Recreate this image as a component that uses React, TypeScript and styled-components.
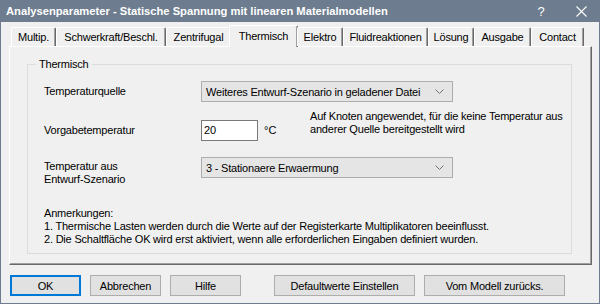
import React from "react";
import styled, { createGlobalStyle } from "styled-components";

const Global = createGlobalStyle`
  html, body { margin: 0; padding: 0; background: #f0f0f0; }
  body { font-family: "Liberation Sans", Arial, sans-serif; font-size: 11px; color: #000; }
  * { box-sizing: border-box; }
`;

const Window = styled.div`
  width: 600px;
  height: 304px;
  background: #f0f0f0;
  border: 1px solid #6d7c8e;
  border-top: none;
  display: flex;
  flex-direction: column;
  overflow: hidden;
`;

const TitleBar = styled.div`
  height: 22px;
  margin: 0 -1px;
  background: #6d7c8e;
  display: flex;
  align-items: center;
  padding-left: 6px;
  color: #fff;
  flex-shrink: 0;
`;

const Title = styled.div`
  flex: 1;
  font-weight: bold;
  font-size: 11.2px;
  white-space: nowrap;
`;

const Help = styled.div`
  width: 36px;
  text-align: center;
  font-size: 13px;
  margin-right: 4px;
`;

const Close = styled.div`
  width: 36px;
  display: flex;
  justify-content: center;
  margin-right: 1px;
`;

const Body = styled.div`
  flex: 1;
  padding: 3px 8px 0 8px;
  display: flex;
  flex-direction: column;
`;

const TabStrip = styled.div`
  height: 21px;
  display: flex;
  align-items: flex-end;
  padding-left: 2px;
  position: relative;
  z-index: 1;
`;

const Tab = styled.div<{ $w: number; $active?: boolean }>`
  width: ${(p) => p.$w}px;
  height: ${(p) => (p.$active ? 22 : 19)}px;
  margin: ${(p) => (p.$active ? "0 -1px -1px -2px" : "0")};
  background: #f0f0f0;
  border-left: 1px solid #fff;
  border-top: 1px solid #fff;
  border-right: 1px solid #696969;
  box-shadow: inset -1px 0 0 #a0a0a0;
  border-radius: 2px 2px 0 0;
  display: flex;
  align-items: center;
  justify-content: center;
  padding-bottom: ${(p) => (p.$active ? 2 : 0)}px;
  white-space: nowrap;
  letter-spacing: -0.2px;
`;

const Panel = styled.div`
  height: 219px;
  width: 583px;
  background: #f0f0f0;
  border-left: 1px solid #fff;
  border-top: 1px solid #fff;
  border-right: 1px solid #696969;
  border-bottom: 1px solid #696969;
  box-shadow: inset -1px -1px 0 #a0a0a0;
  padding: 11px 19px 0 17px;
`;

const Group = styled.fieldset`
  margin: 0;
  height: 196px;
  border: 1px solid #dcdcdc;
  padding: 0 0 0 16px;
`;

const Legend = styled.legend`
  padding: 0 3px;
  margin-left: -8px;
  line-height: 13px;
  letter-spacing: -0.2px;
`;

const Row = styled.div<{ $top: number }>`
  display: flex;
  align-items: flex-start;
  margin-top: ${(p) => p.$top}px;
`;

const Label = styled.div<{ $pt: number }>`
  width: 157px;
  flex-shrink: 0;
  padding-top: ${(p) => p.$pt}px;
  line-height: 13px;
  letter-spacing: -0.2px;
`;

const Select = styled.div`
  width: 252px;
  height: 21px;
  flex-shrink: 0;
  background: #e5e5e5;
  border: 1px solid #adadad;
  display: flex;
  align-items: center;
  padding: 0 8px 0 4px;
  letter-spacing: -0.2px;
`;

const SelectText = styled.div`
  flex: 1;
  white-space: nowrap;
`;

const Input = styled.div`
  width: 57px;
  height: 21px;
  flex-shrink: 0;
  background: #fff;
  border: 1px solid #7a7a7a;
  padding: 3px 0 0 2px;
  line-height: 13px;
`;

const Unit = styled.div`
  width: 52px;
  flex-shrink: 0;
  padding: 4px 0 0 6px;
  line-height: 13px;
`;

const Desc = styled.div`
  margin-top: -10px;
  line-height: 13px;
  letter-spacing: -0.2px;
  white-space: nowrap;
`;

const Notes = styled.div`
  margin-top: 21px;
  line-height: 13px;
  letter-spacing: -0.2px;
`;

const ButtonBar = styled.div`
  display: flex;
  margin-top: 10px;
  padding-left: 1px;
`;

const Button = styled.div<{ $w: number; $gap: number; $default?: boolean }>`
  width: ${(p) => p.$w}px;
  height: 21px;
  margin-left: ${(p) => p.$gap}px;
  background: #e1e1e1;
  border: ${(p) => (p.$default ? "2px solid #0078d7" : "1px solid #adadad")};
  display: flex;
  align-items: center;
  justify-content: center;
  letter-spacing: -0.2px;
  white-space: nowrap;
`;

const Chevron = () => (
  <svg width="9" height="5" viewBox="0 0 9 5">
    <polyline points="0.5,0.5 4.5,4.5 8.5,0.5" fill="none" stroke="#707070" strokeWidth="1" />
  </svg>
);

const tabs: [string, number][] = [
  ["Multip.", 45],
  ["Schwerkraft/Beschl.", 110],
  ["Zentrifugal", 65],
  ["Thermisch", 69],
  ["Elektro", 46],
  ["Fluidreaktionen", 85],
  ["Lösung", 46],
  ["Ausgabe", 57],
  ["Contact", 53],
];

export default function App() {
  return (
    <>
      <Global />
      <Window>
        <TitleBar>
          <Title>Analysenparameter - Statische Spannung mit linearen Materialmodellen</Title>
          <Help>?</Help>
          <Close>
            <svg width="11" height="11" viewBox="0 0 11 11">
              <line x1="0.5" y1="0.5" x2="10.5" y2="10.5" stroke="#fff" strokeWidth="1.1" />
              <line x1="10.5" y1="0.5" x2="0.5" y2="10.5" stroke="#fff" strokeWidth="1.1" />
            </svg>
          </Close>
        </TitleBar>
        <Body>
          <TabStrip>
            {tabs.map(([t, w]) => (
              <Tab key={t} $w={w} $active={t === "Thermisch"}>
                {t}
              </Tab>
            ))}
          </TabStrip>
          <Panel>
            <Group>
              <Legend>Thermisch</Legend>
              <Row $top={10}>
                <Label $pt={4}>Temperaturquelle</Label>
                <Select>
                  <SelectText>Weiteres Entwurf-Szenario in geladener Datei</SelectText>
                  <Chevron />
                </Select>
              </Row>
              <Row $top={18}>
                <Label $pt={4}>Vorgabetemperatur</Label>
                <Input>20</Input>
                <Unit>°C</Unit>
                <Desc>
                  Auf Knoten angewendet, für die keine Temperatur aus
                  <br />
                  anderer Quelle bereitgestellt wird
                </Desc>
              </Row>
              <Row $top={16}>
                <Label $pt={3}>
                  Temperatur aus
                  <br />
                  Entwurf-Szenario
                </Label>
                <Select>
                  <SelectText>3 - Stationaere Erwaermung</SelectText>
                  <Chevron />
                </Select>
              </Row>
              <Notes>
                Anmerkungen:
                <br />
                1. Thermische Lasten werden durch die Werte auf der Registerkarte Multiplikatoren beeinflusst.
                <br />
                2. Die Schaltfläche OK wird erst aktiviert, wenn alle erforderlichen Eingaben definiert wurden.
              </Notes>
            </Group>
          </Panel>
          <ButtonBar>
            <Button $w={71} $gap={0} $default>OK</Button>
            <Button $w={71} $gap={9}>Abbrechen</Button>
            <Button $w={71} $gap={9}>Hilfe</Button>
            <Button $w={141} $gap={33}>Defaultwerte Einstellen</Button>
            <Button $w={141} $gap={9}>Vom Modell zurücks.</Button>
          </ButtonBar>
        </Body>
      </Window>
    </>
  );
}
